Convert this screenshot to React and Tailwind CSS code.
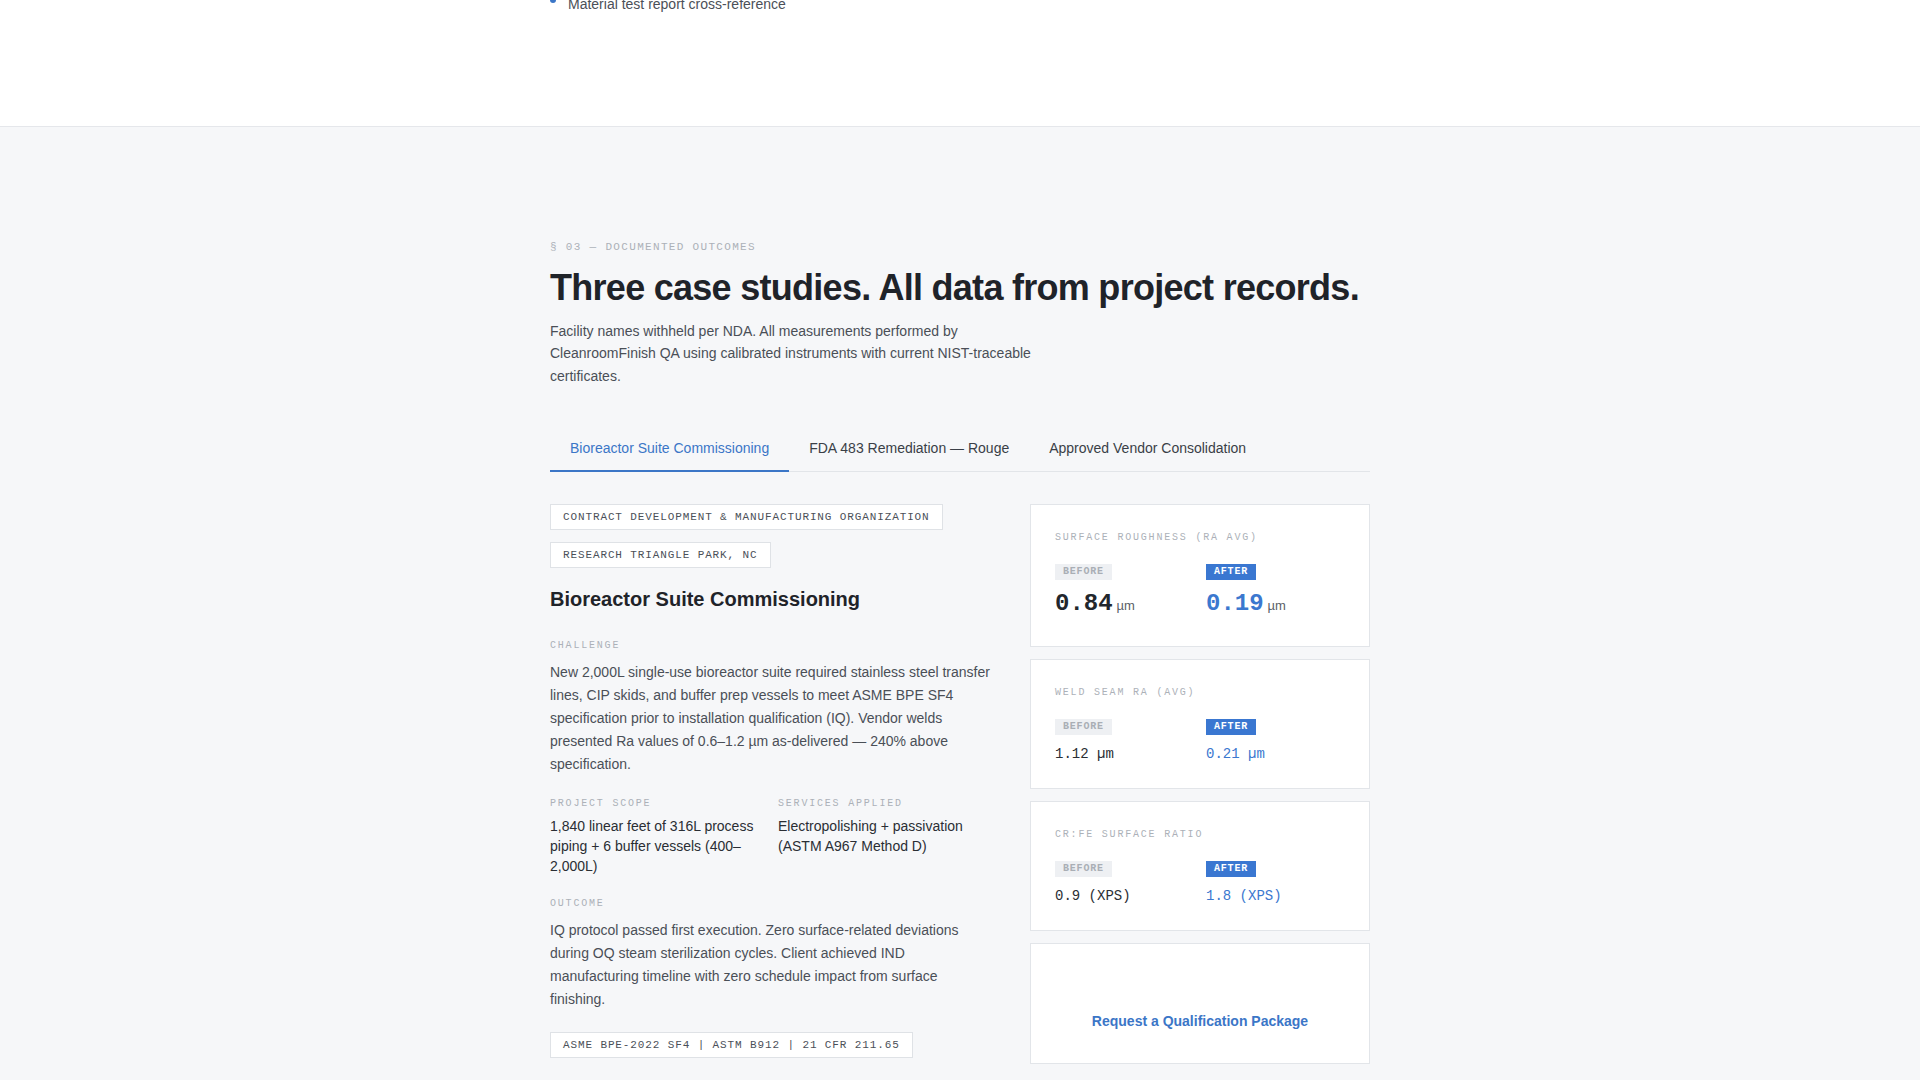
import React, { useState } from 'react'

const sans = "font-['Liberation_Sans',Arial,sans-serif]"
const mono = "font-['Liberation_Mono','Courier_New',monospace]"

const tabs = [
  'Bioreactor Suite Commissioning',
  'FDA 483 Remediation — Rouge',
  'Approved Vendor Consolidation',
]

const metrics = [
  { label: 'Surface Roughness (Ra avg)', before: '0.84', after: '0.19', unit: 'µm', big: true },
  { label: 'Weld Seam Ra (avg)', before: '1.12 µm', after: '0.21 µm' },
  { label: 'Cr:Fe Surface Ratio', before: '0.9 (XPS)', after: '1.8 (XPS)' },
]

function Label({ children }) {
  return (
    <div className={`${mono} text-[10px] leading-4 uppercase tracking-[0.18em] text-[#acb1b8]`}>
      {children}
    </div>
  )
}

function Pill({ children }) {
  return (
    <span className={`${mono} inline-flex items-center h-[26px] px-3 bg-white border border-[#dfe2e6] text-[11px] tracking-[0.08em] uppercase text-[#4b5058]`}>
      {children}
    </span>
  )
}

function MetricCard({ m }) {
  return (
    <div className="bg-white border border-[#e2e5e9] px-6 pt-[25px] pb-6">
      <Label>{m.label}</Label>
      <div className="grid grid-cols-2 gap-3 mt-[18px]">
        <div>
          <span className={`${mono} block w-fit h-4 px-2 leading-4 text-[10px] font-bold tracking-[0.08em] bg-[#eef0f3] text-[#a9aeb5]`}>
            BEFORE
          </span>
          {m.big ? (
            <div className="mt-2 flex items-baseline leading-8">
              <span className={`${mono} text-[24px] font-bold text-[#22262c]`}>{m.before}</span>
              <span className="ml-1 text-[13px] text-[#5a5f67]">{m.unit}</span>
            </div>
          ) : (
            <div className={`${mono} mt-[9px] text-[14px] leading-5 text-[#2a2e34]`}>{m.before}</div>
          )}
        </div>
        <div>
          <span className={`${mono} block w-fit h-4 px-2 leading-4 text-[10px] font-bold tracking-[0.08em] bg-[#3a77d1] text-white`}>
            AFTER
          </span>
          {m.big ? (
            <div className="mt-2 flex items-baseline leading-8">
              <span className={`${mono} text-[24px] font-bold text-[#3b78cf]`}>{m.after}</span>
              <span className="ml-1 text-[13px] text-[#5a5f67]">{m.unit}</span>
            </div>
          ) : (
            <div className={`${mono} mt-[9px] text-[14px] leading-5 text-[#3b78cf]`}>{m.after}</div>
          )}
        </div>
      </div>
    </div>
  )
}

export default function App() {
  const [active, setActive] = useState(0)

  return (
    <div className={`min-h-screen bg-[#f6f7f9] ${sans}`}>
      {/* end of previous section */}
      <section className="bg-white border-b border-[#e5e7eb] h-[127px]">
        <div className="w-[820px] mx-auto flex flex-col">
          <ul className="-mt-[6px]">
            <li className="flex items-start gap-3 text-[14px] leading-5 text-[#4b5058]">
              <span className="mt-[3px] w-1.5 h-1.5 rounded-full bg-[#3b76c7] shrink-0" />
              Material test report cross-reference
            </li>
          </ul>
        </div>
      </section>

      <section className="pt-[112px] pb-24">
        <div className="w-[820px] mx-auto">
          <div className={`${mono} text-[11px] leading-4 tracking-[0.12em] uppercase text-[#acb1b8]`}>
            § 03 — Documented Outcomes
          </div>
          <h2 className="mt-3 text-[36px] leading-[42px] font-bold tracking-[-0.02em] text-[#1f2329]">
            Three case studies. All data from project records.
          </h2>
          <p className="mt-[11px] max-w-[496px] text-[14px] leading-[22.4px] text-[#4a4f57]">
            Facility names withheld per NDA. All measurements performed by CleanroomFinish QA using
            calibrated instruments with current NIST-traceable certificates.
          </p>

          {/* tabs */}
          <div className="mt-[39px] flex border-b border-[#e2e5e9]">
            {tabs.map((t, i) => (
              <button
                key={t}
                onClick={() => setActive(i)}
                className={
                  i === active
                    ? 'px-5 py-3 -mb-px text-[14px] leading-5 border-b-2 border-[#3b76c7] text-[#3b76c7]'
                    : 'px-5 py-3 -mb-px text-[14px] leading-5 border-b-2 border-transparent text-[#3a3f47]'
                }
              >
                {t}
              </button>
            ))}
          </div>

          <div className="mt-8 grid grid-cols-[440px_1fr] gap-10 items-start">
            {/* case study */}
            <div>
              <div className="flex flex-wrap gap-3">
                <Pill>Contract Development &amp; Manufacturing Organization</Pill>
                <Pill>Research Triangle Park, NC</Pill>
              </div>
              <h3 className="mt-[18px] text-[20px] leading-[26px] font-bold text-[#1f2329]">
                Bioreactor Suite Commissioning
              </h3>

              <div className="mt-[26px]">
                <Label>Challenge</Label>
                <p className="mt-[7px] text-[14px] leading-[23px] text-[#4a4f57]">
                  New 2,000L single-use bioreactor suite required stainless steel transfer lines, CIP
                  skids, and buffer prep vessels to meet ASME BPE SF4 specification prior to
                  installation qualification (IQ). Vendor welds presented Ra values of 0.6–1.2 µm
                  as-delivered — 240% above specification.
                </p>
              </div>

              <div className="mt-5 grid grid-cols-2 gap-4">
                <div>
                  <Label>Project Scope</Label>
                  <p className="mt-1 text-[14px] leading-5 text-[#2a2e34]">
                    1,840 linear feet of 316L process piping + 6 buffer vessels (400–2,000L)
                  </p>
                </div>
                <div>
                  <Label>Services Applied</Label>
                  <p className="mt-1 text-[14px] leading-5 text-[#2a2e34]">
                    Electropolishing + passivation (ASTM A967 Method D)
                  </p>
                </div>
              </div>

              <div className="mt-5">
                <Label>Outcome</Label>
                <p className="mt-[7px] text-[14px] leading-[23px] text-[#4a4f57]">
                  IQ protocol passed first execution. Zero surface-related deviations during OQ steam
                  sterilization cycles. Client achieved IND manufacturing timeline with zero schedule
                  impact from surface finishing.
                </p>
              </div>

              <div className="mt-5">
                <Pill>ASME BPE-2022 SF4 | ASTM B912 | 21 CFR 211.65</Pill>
              </div>
            </div>

            {/* metrics */}
            <div className="flex flex-col gap-3">
              {metrics.map((m) => (
                <MetricCard key={m.label} m={m} />
              ))}
              <div className="bg-white border border-[#e2e5e9] h-[121px] flex flex-col justify-end px-6 pb-5">
                <a href="#" className="block py-3 text-center text-[14px] leading-5 font-bold text-[#3b76c7]">
                  Request a Qualification Package
                </a>
              </div>
            </div>
          </div>
        </div>
      </section>
    </div>
  )
}
